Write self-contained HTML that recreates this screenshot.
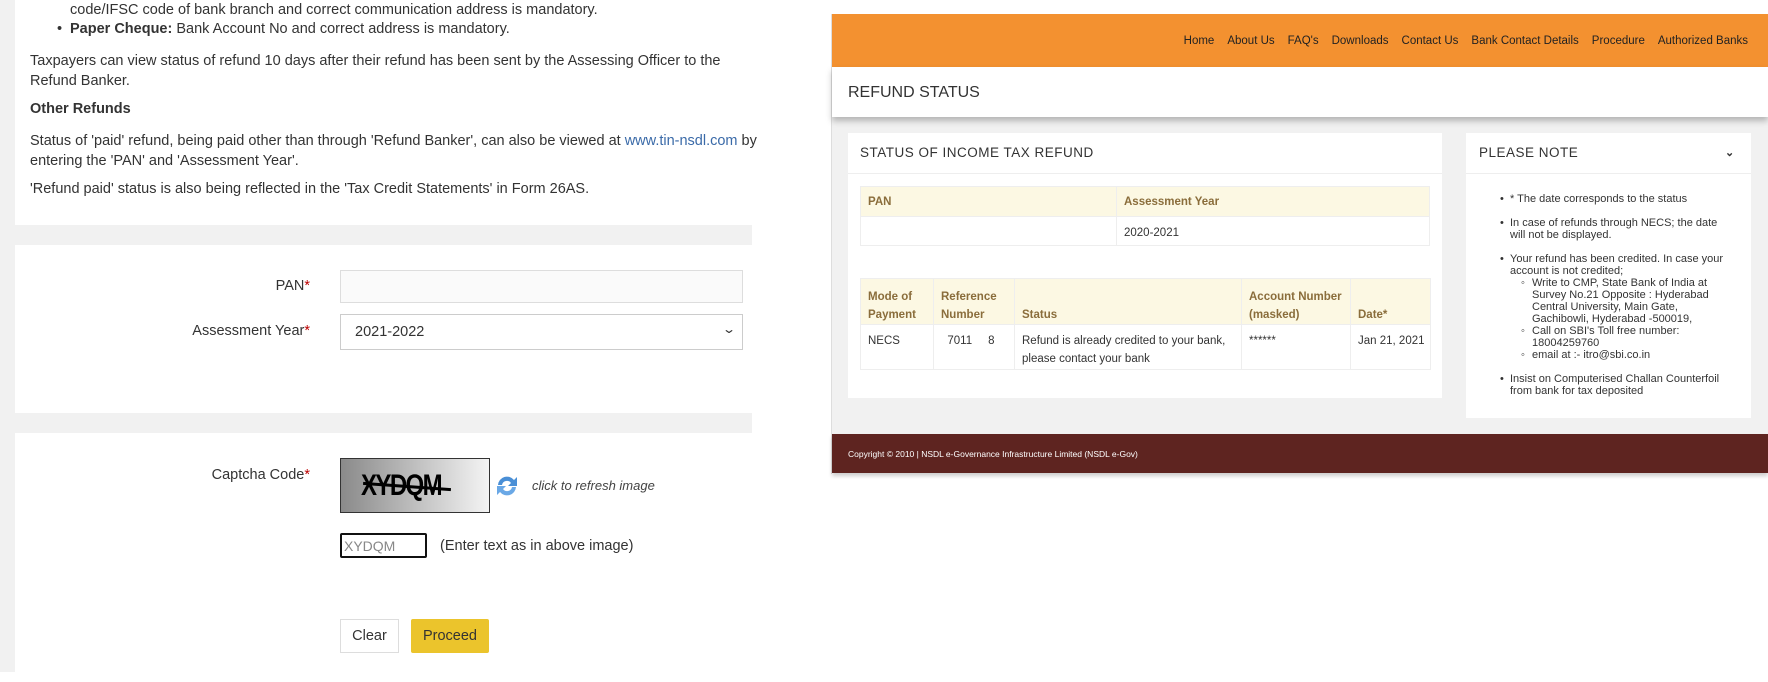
<!DOCTYPE html>
<html><head><meta charset="utf-8"><style>
*{margin:0;padding:0;box-sizing:border-box}
body{width:1768px;height:682px;position:relative;background:#fff;font-family:"Liberation Sans",sans-serif;color:#333;overflow:hidden}
.a{position:absolute;white-space:nowrap}
.lt{font-size:14.5px;color:#333}
.g{background:#f1f1f1;position:absolute}
.nav span{margin-left:13px}
table{border-collapse:collapse;font-size:11.5px;position:absolute;table-layout:fixed}
td,th{border:1px solid #eee;text-align:left;vertical-align:bottom;padding:0 7px;white-space:nowrap}
th{background:#fcf8e3;color:#8a6d3b;font-weight:bold;line-height:18px}
td{vertical-align:top;line-height:18px;padding-top:7px}
ul.n{position:absolute;left:1500px;top:193px;font-size:11px;line-height:12px;color:#333;list-style:none}
ul.n>li{position:relative;padding-left:10px;margin-bottom:12px}
ul.n>li:before{content:"•";position:absolute;left:0}
ul.s{list-style:none;padding-left:32px}
ul.s li{position:relative}
ul.s li:before{content:"◦";position:absolute;left:-11px}
</style></head><body>
<div class="g" style="left:0;top:0;width:15px;height:672px"></div>
<div class="g" style="left:15px;top:225px;width:737px;height:20px"></div>
<div class="g" style="left:15px;top:413px;width:737px;height:20px"></div>
<div class="a lt" style="left:70px;top:2px">code/IFSC code of bank branch and correct communication address is mandatory.</div>
<div class="a lt" style="left:57px;top:21px">•</div>
<div class="a lt" style="left:70px;top:21px"><b>Paper Cheque:</b> Bank Account No and correct address is mandatory.</div>
<div class="a lt" style="left:30px;top:51px;line-height:20px">Taxpayers can view status of refund 10 days after their refund has been sent by the Assessing Officer to the<br>Refund Banker.</div>
<div class="a lt" style="left:30px;top:101px"><b>Other Refunds</b></div>
<div class="a lt" style="left:30px;top:131px;line-height:20px">Status of 'paid' refund, being paid other than through 'Refund Banker', can also be viewed at <span style="color:#3a6aa8">www.tin-nsdl.com</span> by<br>entering the 'PAN' and 'Assessment Year'.</div>
<div class="a lt" style="left:30px;top:181px">'Refund paid' status is also being reflected in the 'Tax Credit Statements' in Form 26AS.</div>
<div class="a lt" style="right:1458px;top:278px">PAN<span style="color:#b00">*</span></div>
<div class="a" style="left:340px;top:270px;width:403px;height:33px;border:1px solid #ddd;background:#fafafa"></div>
<div class="a lt" style="right:1458px;top:323px">Assessment Year<span style="color:#b00">*</span></div>
<div class="a" style="left:340px;top:314px;width:403px;height:36px;border:1px solid #ccc;background:#fff;font-size:14.5px;padding:9px 14px">2021-2022<span style="position:absolute;right:8px;top:7px;font-size:12px;transform:scaleX(1.4)">⌄</span></div>
<div class="a lt" style="right:1458px;top:467px">Captcha Code<span style="color:#b00">*</span></div>
<div class="a" style="left:340px;top:458px;width:150px;height:55px;border:1px solid #333;background:linear-gradient(90deg,#8a8a8a,#f4f4f4)"><span style="position:absolute;left:20px;top:10px;font:bold 30px 'Liberation Sans';letter-spacing:-2px;color:#000;transform:scaleX(.8);transform-origin:left">XYDQM</span><span style="position:absolute;left:22px;top:26px;width:88px;height:3px;background:#000;transform:rotate(4deg)"></span></div>
<svg class="a" style="left:494px;top:472px" width="26" height="28" viewBox="0 0 26 28"><path d="M4 13a9 9 0 0 1 16-5l3-3v9h-9l3-3a5 5 0 0 0-9 2z" fill="#4a8fd6"/><path d="M22 15a9 9 0 0 1-16 5l-3 3v-9h9l-3 3a5 5 0 0 0 9-2z" fill="#6aa8e6"/></svg>
<div class="a" style="left:532px;top:478px;font-size:13px;font-style:italic;color:#444">click to refresh image</div>
<div class="a" style="left:340px;top:533px;width:87px;height:25px;border:2px solid #111;border-radius:2px;font-size:14px;color:#888;padding:3px 2px">XYDQM</div>
<div class="a lt" style="left:440px;top:538px">(Enter text as in above image)</div>
<div class="a" style="left:340px;top:619px;width:59px;height:34px;border:1px solid #ddd;font-size:14.5px;text-align:center;line-height:32px">Clear</div>
<div class="a" style="left:411px;top:619px;width:78px;height:34px;background:#ebc42c;border-radius:2px;font-size:14.5px;text-align:center;line-height:34px;color:#333">Proceed</div>
<div class="g" style="left:831px;top:117px;width:937px;height:317px"></div>
<div class="a" style="left:831px;top:14px;width:1px;height:460px;background:#ddd"></div>
<div class="a nav" style="left:832px;top:14px;width:936px;height:53px;background:#f39130;font-size:11.5px;color:#222;text-align:right;padding:21px 20px 0 0">
<span>Home</span><span>About Us</span><span>FAQ's</span><span>Downloads</span><span>Contact Us</span><span>Bank Contact Details</span><span>Procedure</span><span>Authorized Banks</span></div>
<div class="a" style="left:832px;top:67px;width:936px;height:50px;background:#fff;box-shadow:0 4px 6px rgba(0,0,0,.25)"></div>
<div class="a" style="left:848px;top:84px;font-size:16px;color:#333">REFUND STATUS</div>
<div class="a" style="left:848px;top:133px;width:594px;height:265px;background:#fff"></div>
<div class="a" style="left:848px;top:173px;width:594px;height:1px;background:#eee"></div>
<div class="a" style="left:860px;top:145px;font-size:13.5px;letter-spacing:.5px;color:#333">STATUS OF INCOME TAX REFUND</div>
<table style="left:860px;top:186px;width:570px">
<tr style="height:30px"><th style="width:256px;vertical-align:middle">PAN</th><th style="vertical-align:middle">Assessment Year</th></tr>
<tr style="height:29px"><td></td><td>2020-2021</td></tr></table>
<table style="left:860px;top:278px;width:570px">
<colgroup><col style="width:73px"><col style="width:81px"><col style="width:227px"><col style="width:109px"><col style="width:80px"></colgroup>
<tr style="height:46px"><th>Mode of<br>Payment</th><th>Reference<br>Number</th><th>Status</th><th>Account Number<br>(masked)</th><th>Date*</th></tr>
<tr style="height:45px"><td>NECS</td><td>&nbsp;&nbsp;7011&nbsp;&nbsp;&nbsp;&nbsp;&nbsp;8</td><td>Refund is already credited to your bank,<br>please contact your bank</td><td>******</td><td>Jan 21, 2021</td></tr></table>
<div class="a" style="left:1466px;top:133px;width:285px;height:285px;background:#fff"></div>
<div class="a" style="left:1466px;top:173px;width:285px;height:1px;background:#eee"></div>
<div class="a" style="left:1479px;top:145px;font-size:13.5px;letter-spacing:.5px">PLEASE NOTE</div>
<div class="a" style="left:1725px;top:146px;font-size:11px;font-weight:bold">⌄</div>
<ul class="n">
<li>* The date corresponds to the status</li>
<li>In case of refunds through NECS; the date<br>will not be displayed.</li>
<li>Your refund has been credited. In case your<br>account is not credited;
<ul class="s" style="padding-left:22px"><li>Write to CMP, State Bank of India at<br>Survey No.21 Opposite : Hyderabad<br>Central University, Main Gate,<br>Gachibowli, Hyderabad -500019,</li><li>Call on SBI's Toll free number:<br>18004259760</li><li>email at :- itro@sbi.co.in</li></ul></li>
<li>Insist on Computerised Challan Counterfoil<br>from bank for tax deposited</li>
</ul>
<div class="a" style="left:832px;top:434px;width:936px;height:39px;background:#5e2420;box-shadow:0 3px 4px rgba(0,0,0,.2)"></div>
<div class="a" style="left:848px;top:449px;font-size:8.5px;color:#fff">Copyright © 2010 | NSDL e-Governance Infrastructure Limited (NSDL e-Gov)</div>
</body></html>
